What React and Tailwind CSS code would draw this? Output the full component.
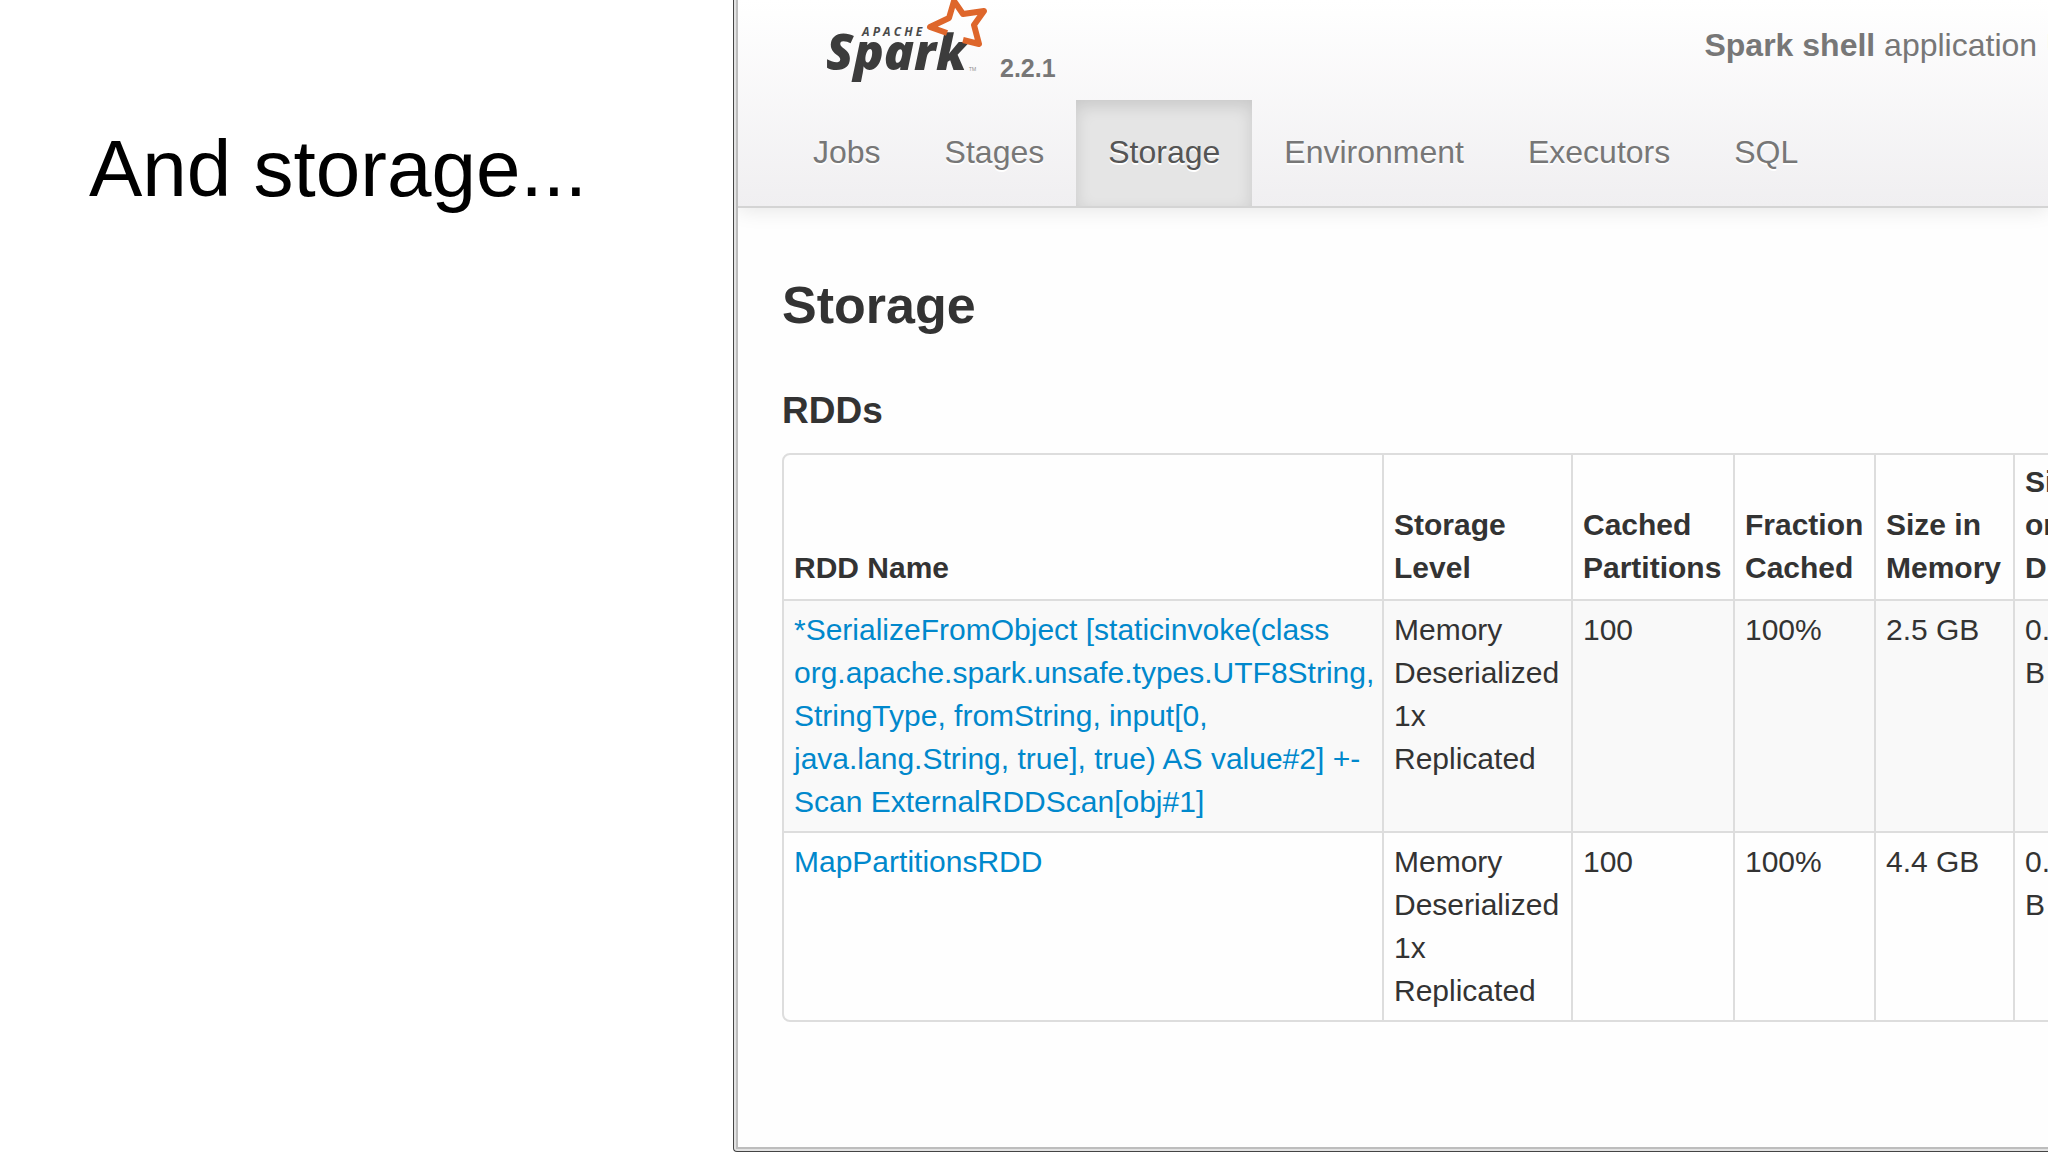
import React from "react";

const tabs = ["Jobs", "Stages", "Storage", "Environment", "Executors", "SQL"];

const columns = [
  "RDD Name",
  "Storage Level",
  "Cached Partitions",
  "Fraction Cached",
  "Size in Memory",
  "Size on Disk",
];

const rdds = [
  {
    name: "*SerializeFromObject [staticinvoke(class org.apache.spark.unsafe.types.UTF8String, StringType, fromString, input[0, java.lang.String, true], true) AS value#2] +- Scan ExternalRDDScan[obj#1]",
    level: "Memory Deserialized 1x Replicated",
    partitions: "100",
    fraction: "100%",
    memory: "2.5 GB",
    disk: "0.0 B",
  },
  {
    name: "MapPartitionsRDD",
    level: "Memory Deserialized 1x Replicated",
    partitions: "100",
    fraction: "100%",
    memory: "4.4 GB",
    disk: "0.0 B",
  },
];

function SparkLogo() {
  return (
    <svg
      className="block h-[84px] w-[172px] shrink-0"
      viewBox="820 0 172 84"
      role="img"
      aria-label="Apache Spark"
    >
      <text
        x="862"
        y="36"
        fill="#4a4a4a"
        fontFamily="'Open Sans', sans-serif"
        fontSize="12"
        fontWeight="700"
        fontStyle="italic"
      >
        A P A C H E
      </text>
      <text
        x="826"
        y="70"
        fill="#3c3c3c"
        fontFamily="'Open Sans', sans-serif"
        fontSize="50"
        fontWeight="800"
        fontStyle="italic"
      >
        Spark
      </text>
      <path
        d="M947 33 L930 27 L949 18 L954 1 L963 14 L984 11 L974 25 L979 44 L963 40"
        fill="none"
        stroke="#de662b"
        strokeWidth="6"
        strokeLinejoin="round"
      />
      <text x="969" y="71" fill="#8a8a8a" fontFamily="'Open Sans', sans-serif" fontSize="5">
        TM
      </text>
    </svg>
  );
}

function Header() {
  return (
    <header className="border-b-2 border-[#d4d4d4] bg-linear-to-b from-white to-[#f0eff1] pl-[43px] text-[32px] leading-10 text-[#777777] shadow-[0_2px_20px_rgba(0,0,0,0.1)]">
      <div className="flex h-[100px] items-start">
        <a href="#home" className="ml-[39px] flex shrink-0 items-start">
          <SparkLogo />
          <span className="ml-2 pt-[52px] text-[25px] leading-8 font-bold">2.2.1</span>
        </a>
        <p className="-mr-[30px] ml-auto pt-[25px] whitespace-nowrap">
          <strong>Spark shell</strong> application UI
        </p>
      </div>

      <nav className="flex">
        {tabs.map((tab) => (
          <a
            key={tab}
            href={`#${tab.toLowerCase()}`}
            className={
              tab === "Storage"
                ? "bg-[#e5e5e5] px-8 pt-8 pb-[34px] text-[#555555] shadow-[inset_0_6px_16px_rgba(0,0,0,0.125)] text-shadow-[0_2px_0_#ffffff]"
                : "px-8 pt-8 pb-[34px] text-shadow-[0_2px_0_#ffffff]"
            }
          >
            {tab}
          </a>
        ))}
      </nav>
    </header>
  );
}

function RddTable() {
  return (
    <div className="w-[1316px] rounded-[8px] border-2 border-[#dddddd]">
      <table className="w-full table-fixed border-collapse text-left text-[30px] leading-[43px]">
        <colgroup>
          <col className="w-[599px]" />
          <col className="w-[189px]" />
          <col className="w-[162px]" />
          <col className="w-[141px]" />
          <col className="w-[139px]" />
          <col />
        </colgroup>
        <thead>
          <tr>
            {columns.map((column) => (
              <th
                key={column}
                className="border-l-2 border-[#dddddd] px-[10px] pt-[5px] pb-[10px] align-bottom font-bold first:border-l-0"
              >
                {column}
              </th>
            ))}
          </tr>
        </thead>
        <tbody>
          {rdds.map((rdd) => (
            <tr key={rdd.name} className="border-t-2 border-[#dddddd] align-top odd:bg-[#f9f9f9]">
              <td className="px-[10px] pt-[7px] pb-2">
                <a href="#rdd" className="text-[#0088cc]">
                  {rdd.name}
                </a>
              </td>
              <td className="border-l-2 border-[#dddddd] px-[10px] pt-[7px] pb-2">{rdd.level}</td>
              <td className="border-l-2 border-[#dddddd] px-[10px] pt-[7px] pb-2">{rdd.partitions}</td>
              <td className="border-l-2 border-[#dddddd] px-[10px] pt-[7px] pb-2">{rdd.fraction}</td>
              <td className="border-l-2 border-[#dddddd] px-[10px] pt-[7px] pb-2">{rdd.memory}</td>
              <td className="border-l-2 border-[#dddddd] px-[10px] pt-[7px] pb-2">{rdd.disk}</td>
            </tr>
          ))}
        </tbody>
      </table>
    </div>
  );
}

function App() {
  return (
    <div className="grid min-h-screen grid-cols-[733fr_1315fr] overflow-hidden bg-white font-['Liberation_Sans',Arial,sans-serif]">
      <section className="pt-[125px] pl-[89px]">
        <h1 className="text-[80px] leading-[88px] text-black">And storage...</h1>
      </section>

      {/* Browser window */}
      <section className="flex min-w-0 overflow-hidden rounded-bl-[4px] border-b border-l border-[#444444] bg-[#e2e2e2] pb-[2px] pl-[2px]">
        <div className="min-w-0 grow overflow-hidden border-b-2 border-l-2 border-[#bdbdbd] bg-[#fefefe] text-[#333333]">
          <Header />
          <main className="pt-[64px] pl-[44px]">
            <h2 className="text-[52px] leading-[66px] font-bold">Storage</h2>
            <h3 className="mt-[51px] mb-[20px] text-[37px] leading-[44px] font-bold">RDDs</h3>
            <RddTable />
          </main>
        </div>
      </section>
    </div>
  );
}

export default App;
